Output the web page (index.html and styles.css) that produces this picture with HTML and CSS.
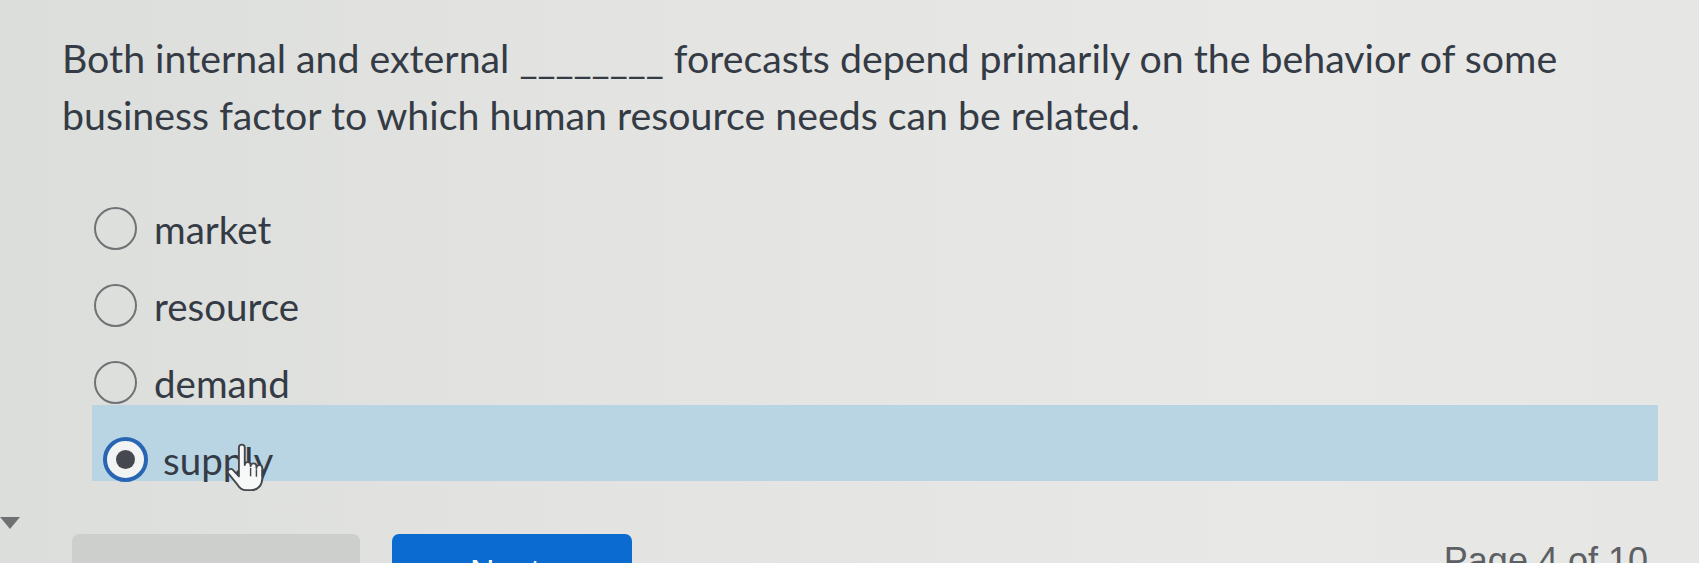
FILE: index.html
```html
<!DOCTYPE html>
<html lang="en">
<head>
<meta charset="utf-8">
<title>Quiz question</title>
<link rel="stylesheet" href="styles.css">
</head>
<body>
<div class="page">
  <div class="question">Both internal and external ________ forecasts depend primarily on the behavior of some business factor to which human resource needs can be related.</div>
  <div class="answers">
    <label class="answer"><span class="radio"></span><span class="answer-text">market</span></label>
    <label class="answer"><span class="radio"></span><span class="answer-text">resource</span></label>
    <label class="answer"><span class="radio"></span><span class="answer-text">demand</span></label>
    <label class="answer selected"><span class="radio checked"><span class="dot"></span></span><span class="answer-text">supply</span>
      <svg class="cursor" viewBox="0 0 20 24" width="42" height="50" aria-hidden="true">
        <path d="M6.6 2.2a1.4 1.4 0 0 1 2.8 0V10.6a1.4 1.4 0 0 1 2.8 0v0.6a1.4 1.4 0 0 1 2.8 0v0.8a1.4 1.4 0 0 1 2.8 0V17c0 3.2-2.1 5.6-5.2 5.6h-2.6c-2 0-3.1-1-4.1-2.6L1.5 14.6a1.4 1.4 0 0 1 2.2-1.7L6.6 16Z" fill="#f7f8f8" stroke="#45484d" stroke-width="0.9" stroke-linejoin="round"/>
        <path d="M12.2 12v4M15 12.6v3.6M17.8 13v3.2" stroke="#45484d" stroke-width="0.7" fill="none"/>
      </svg>
    </label>
  </div>
  <div class="footer">
    <div class="toggle"></div>
    <div class="footer-row">
      <div class="btn btn-prev"></div>
      <div class="btn btn-next">Next</div>
      <div class="page-count">Page 4 of 10</div>
    </div>
  </div>
</div>
</body>
</html>
```
FILE: styles.css
```css
html, body {
  margin: 0;
  padding: 0;
}
body {
  width: 1699px;
  height: 563px;
  overflow: hidden;
  background: linear-gradient(90deg, #dcdedb 0%, #e3e4e1 35%, #e8e8e6 75%, #e6e6e4 100%);
  font-family: Lato, "Open Sans", sans-serif;
  color: #343b45;
}
.page {
  display: flex;
  flex-direction: column;
}
.question {
  padding: 29px 100px 0 62px;
  font-size: 39.3px;
  line-height: 57px;
}
.answers {
  margin: 38px 41px 0 92px;
  display: flex;
  flex-direction: column;
}
.answer {
  position: relative;
  display: flex;
  align-items: center;
  gap: 17px;
  height: 77px;
  box-sizing: border-box;
  padding: 18px 0 0 2px;
  font-size: 38.5px;
}
.answer.selected {
  margin-top: -7px;
  height: 76px;
  padding-top: 33px;
  background: #b9d5e4;
}
.radio {
  width: 43px;
  height: 43px;
  box-sizing: border-box;
  border: 2px solid #707276;
  border-radius: 50%;
  flex: none;
  display: flex;
  align-items: center;
  justify-content: center;
}
.radio.checked {
  width: 45px;
  height: 45px;
  margin-left: 9px;
  margin-right: -2px;
  border: 4px solid #2866b4;
  background: #f2f3f3;
}
.dot {
  width: 19px;
  height: 19px;
  border-radius: 50%;
  background: #45494f;
}
.cursor {
  position: absolute;
  left: 133px;
  top: 38px;
}
.footer {
  margin-top: 36px;
  display: flex;
  flex-direction: column;
}
.toggle {
  width: 0;
  height: 0;
  border-left: 10px solid transparent;
  border-right: 10px solid transparent;
  border-top: 12px solid #6f7072;
}
.footer-row {
  display: flex;
  align-items: flex-start;
  margin-top: 5px;
  padding: 0 51px 0 72px;
}
.btn {
  height: 60px;
  border-radius: 7px;
  box-sizing: border-box;
}
.btn-prev {
  width: 288px;
  background: #cdcfcd;
}
.btn-next {
  width: 240px;
  margin-left: 32px;
  background: #0b6bd0;
  color: #ffffff;
  font-family: "Liberation Sans", Arial, sans-serif;
  font-size: 34px;
  text-align: center;
  padding: 18px 14px 0 0;
}
.page-count {
  margin-left: auto;
  margin-top: 6px;
  font-family: "Liberation Sans", Arial, sans-serif;
  font-size: 36px;
  color: #5c5f63;
}
```
